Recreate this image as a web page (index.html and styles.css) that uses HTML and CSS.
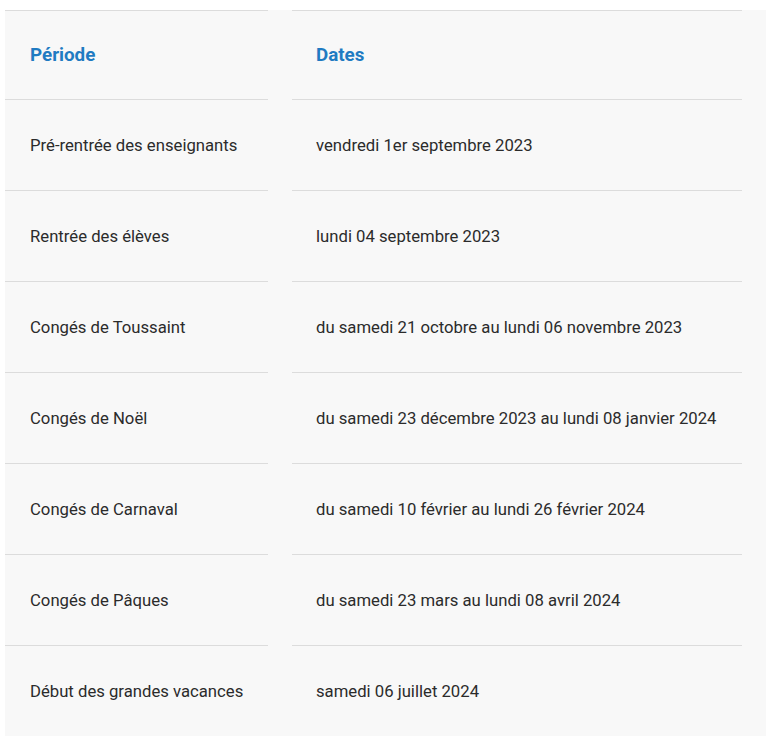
FILE: index.html
```html
<!DOCTYPE html>
<html lang="fr">
<head>
    <meta charset="UTF-8">
    <meta name="viewport" content="width=device-width, initial-scale=1.0">
    <title>Calendrier scolaire 2023-2024</title>
    <link rel="stylesheet" href="styles.css">
</head>
<body>
    <div class="calendar">
        <div class="cell head">Période</div>
        <div class="cell head">Dates</div>

        <div class="cell">Pré-rentrée des enseignants</div>
        <div class="cell">vendredi 1er septembre 2023</div>

        <div class="cell">Rentrée des élèves</div>
        <div class="cell">lundi 04 septembre 2023</div>

        <div class="cell">Congés de Toussaint</div>
        <div class="cell">du samedi 21 octobre au lundi 06 novembre 2023</div>

        <div class="cell">Congés de Noël</div>
        <div class="cell">du samedi 23 décembre 2023 au lundi 08 janvier 2024</div>

        <div class="cell">Congés de Carnaval</div>
        <div class="cell">du samedi 10 février au lundi 26 février 2024</div>

        <div class="cell">Congés de Pâques</div>
        <div class="cell">du samedi 23 mars au lundi 08 avril 2024</div>

        <div class="cell">Début des grandes vacances</div>
        <div class="cell">samedi 06 juillet 2024</div>
    </div>
</body>
</html>
```

FILE: styles.css
```css
* {
    margin: 0;
    padding: 0;
    box-sizing: border-box;
}

body {
    font-family: Roboto, 'Liberation Sans', sans-serif;
    background-color: #fff;
    color: #2b2b2b;
    padding: 10px 0 0 5px;
}

/* Tableau du calendrier */
.calendar {
    width: 761px;
    display: grid;
    grid-template-columns: 263px 450px;
    column-gap: 24px;
    padding-right: 24px;
    background-color: #f8f8f8;
}

.cell {
    height: 91px;
    display: flex;
    align-items: center;
    padding: 0 24px 0 25px;
    border-top: 1px solid #dcdcdc;
    font-size: 16.7px;
    white-space: nowrap;
}

.cell:nth-child(even) {
    padding-left: 24px;
}

.head {
    height: 89px;
    font-size: 18.8px;
    font-weight: bold;
    color: #1f7bc2;
}
```
